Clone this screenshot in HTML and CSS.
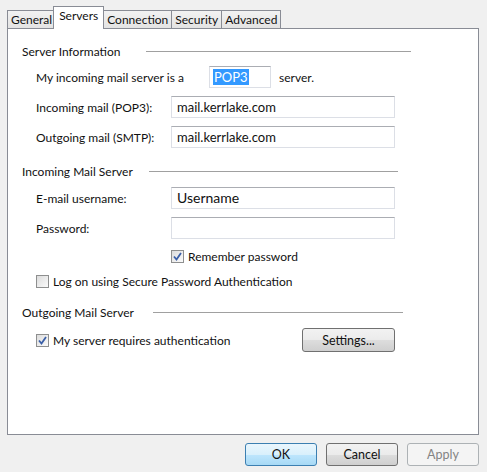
FILE: index.html
```html
<!DOCTYPE html>
<html lang="en">
<head>
    <meta charset="UTF-8">
    <title>Account Properties - Servers</title>
    <link rel="stylesheet" href="styles.css">
</head>
<body>

    <div class="dialog">
        <div class="tabs">
            <div class="tab">General</div>
            <div class="tab selected">Servers</div>
            <div class="tab">Connection</div>
            <div class="tab">Security</div>
            <div class="tab">Advanced</div>
        </div>

        <div class="panel">
            <!-- Server Information -->
            <div class="group-title first">
                <span>Server Information</span>
                <span class="rule rule-1"></span>
            </div>
            <div class="row server-type">
                <span class="type-label">My incoming mail server is a</span>
                <span class="textbox small"><span class="selected-text">POP3</span></span>
                <span>server.</span>
            </div>
            <div class="row">
                <label class="field-label">Incoming mail (POP3):</label>
                <span class="textbox">mail.kerrlake.com</span>
            </div>
            <div class="row">
                <label class="field-label">Outgoing mail (SMTP):</label>
                <span class="textbox">mail.kerrlake.com</span>
            </div>

            <!-- Incoming Mail Server -->
            <div class="group-title">
                <span>Incoming Mail Server</span>
                <span class="rule rule-2"></span>
            </div>
            <div class="row">
                <label class="field-label">E-mail username:</label>
                <span class="textbox big-text">Username</span>
            </div>
            <div class="row">
                <label class="field-label">Password:</label>
                <span class="textbox"></span>
            </div>
            <div class="check-row remember">
                <span class="checkbox checked">
                    <svg width="9" height="9" viewBox="0 0 9 9"><path d="M1 4.5 L3.5 7.5 L8 1" fill="none" stroke="#3a5fa8" stroke-width="1.8"/></svg>
                </span>
                <span>Remember password</span>
            </div>
            <div class="check-row spa">
                <span class="checkbox"></span>
                <span>Log on using Secure Password Authentication</span>
            </div>

            <!-- Outgoing Mail Server -->
            <div class="group-title">
                <span>Outgoing Mail Server</span>
                <span class="rule rule-3"></span>
            </div>
            <div class="auth-row">
                <div class="check-row">
                    <span class="checkbox checked">
                        <svg width="9" height="9" viewBox="0 0 9 9"><path d="M1 4.5 L3.5 7.5 L8 1" fill="none" stroke="#3a5fa8" stroke-width="1.8"/></svg>
                    </span>
                    <span>My server requires authentication</span>
                </div>
                <button class="btn settings">Settings...</button>
            </div>
        </div>

        <div class="buttons">
            <button class="btn default">OK</button>
            <button class="btn">Cancel</button>
            <button class="btn" disabled>Apply</button>
        </div>
    </div>

</body>
</html>
```

FILE: styles.css
```css
/* Dialog frame */
body {
    margin: 0;
    background: #f0f0f0;
    font-family: 'Lato', 'Noto Sans', sans-serif;
    font-size: 12px;
    color: #111;
}

.dialog {
    width: 487px;
    height: 472px;
    padding-top: 7px;
    box-sizing: border-box;
}

/* Tabs */
.tabs {
    display: flex;
    align-items: flex-end;
    height: 21px;
    padding-left: 7px;
    position: relative;
    z-index: 1;
}

.tab {
    height: 18px;
    padding: 0 3px;
    line-height: 17px;
    border: 1px solid #898c95;
    border-bottom: none;
    margin-right: -1px;
    background: linear-gradient(#f2f2f2, #e3e3e3);
    box-sizing: border-box;
}

.tab.selected {
    height: 23px;
    margin: 0 -1px -1px -2px;
    padding: 0 5px;
    line-height: 18px;
    background: #fff;
    position: relative;
    z-index: 2;
}

/* Panel */
.panel {
    margin: 0 8px 0 7px;
    height: 407px;
    background: #fff;
    border: 1px solid #898c95;
    box-sizing: border-box;
    padding: 0 0 0 14px;
}

.group-title {
    display: flex;
    align-items: center;
    height: 16px;
    margin-top: 15px;
    white-space: nowrap;
}

.group-title.first {
    margin-top: 14px;
}

.rule {
    flex: 1;
    border-top: 1px solid #a0a0a0;
}

.rule-1 { margin-right: 67px; margin-left: 26px; }
.rule-2 { margin-right: 80px; margin-left: 16px; }
.rule-3 { margin-right: 75px; margin-left: 19px; }

.row {
    display: flex;
    align-items: center;
    height: 22px;
    margin-top: 8px;
    padding-left: 14px;
}

.row.server-type {
    margin-top: 7px;
}

.type-label {
    width: 173px;
}

.field-label {
    width: 135px;
}

.textbox {
    width: 224px;
    height: 22px;
    box-sizing: border-box;
    border: 1px solid #dcdfe6;
    border-top-color: #abadb3;
    padding: 0 5px;
    line-height: 20px;
    background: #fff;
    font-size: 13px;
}

.textbox.small {
    width: 62px;
    margin-right: 8px;
    padding: 2px 3px;
    line-height: 16px;
}

.selected-text {
    display: inline-block;
    background: #3399ff;
    color: #fff;
    padding: 0 1px;
}

.big-text {
    font-size: 14px;
}

/* Checkboxes */
.check-row {
    display: flex;
    align-items: center;
    gap: 4px;
    height: 16px;
}

.check-row.remember {
    margin-top: 9px;
    padding-left: 149px;
}

.check-row.spa {
    margin-top: 9px;
    padding-left: 14px;
}

.checkbox {
    width: 13px;
    height: 13px;
    box-sizing: border-box;
    border: 1px solid #8e8f8f;
    background: linear-gradient(135deg, #dcdcdc, #fbfbfb);
    display: flex;
    align-items: center;
    justify-content: center;
}

.auth-row {
    display: flex;
    align-items: center;
    justify-content: space-between;
    margin-top: 8px;
    padding-left: 14px;
    width: 373px;
    box-sizing: border-box;
}

/* Buttons */
.btn {
    font-family: inherit;
    font-size: 12.5px;
    color: #111;
    width: 72px;
    height: 23px;
    border: 1px solid #707070;
    border-radius: 3px;
    background: linear-gradient(#f2f2f2 0%, #ebebeb 50%, #dddddd 51%, #cfcfcf 100%);
    padding: 0;
}

.btn.settings {
    width: 93px;
    height: 24px;
}

.btn.default {
    border-color: #3c7fb1;
    background: linear-gradient(#eaf6fd 0%, #d9f0fc 50%, #bee6fd 51%, #a7d9f5 100%);
}

.btn:disabled {
    border-color: #adb2b5;
    background: #f4f4f4;
    color: #838383;
}

.buttons {
    display: flex;
    justify-content: flex-end;
    gap: 9px;
    padding: 8px 8px 0 0;
}
```
